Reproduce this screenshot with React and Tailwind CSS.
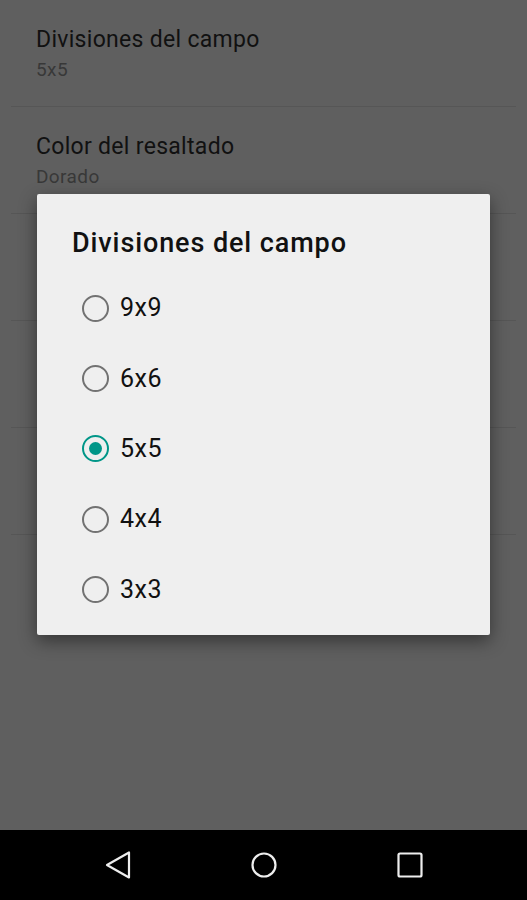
import React from "react";

const font = { fontFamily: "Roboto, 'Noto Sans', sans-serif" };

function BgItem({ title, subtitle }) {
  return (
    <div className="h-[107px] flex flex-col">
      <div className="flex-1 pl-[36px] pt-[27px]">
        {title && (
          <div className="text-[23px] leading-[26px] tracking-[0.3px] text-[#111111]">{title}</div>
        )}
        {subtitle && (
          <div className="mt-[5px] text-[19px] leading-[24px] tracking-[0.4px] text-[#383838]">{subtitle}</div>
        )}
      </div>
      <div className="mx-[11px] h-px bg-[#565656]" />
    </div>
  );
}

function Radio({ label, checked }) {
  return (
    <div className="h-[70.4px] flex items-center pl-[45px]">
      <div
        className={
          "w-[27px] h-[27px] rounded-full border-[2.5px] flex items-center justify-center " +
          (checked ? "border-[#009688]" : "border-[#727272]")
        }
      >
        {checked && <div className="w-[13px] h-[13px] rounded-full bg-[#009688]" />}
      </div>
      <span className="ml-[11px] text-[25px] leading-[28px] tracking-[0.5px] text-[#111111]">{label}</span>
    </div>
  );
}

export default function App() {
  return (
    <div className="relative w-[527px] h-[900px] bg-[#5f5f5f] flex flex-col overflow-hidden" style={font}>
      <div className="flex-1 flex flex-col">
        <BgItem title="Divisiones del campo" subtitle="5x5" />
        <BgItem title="Color del resaltado" subtitle="Dorado" />
        <BgItem />
        <BgItem />
        <BgItem />
      </div>

      <div className="h-[70px] bg-black flex items-center">
        <div className="w-[236px] flex justify-end pr-[0px]">
          <svg width="28" height="30" viewBox="0 0 28 30" className="mr-[104px]">
            <path d="M25 2.5 L25 27.5 L3 15 Z" fill="none" stroke="#eeeeee" strokeWidth="2.2" strokeLinejoin="round" />
          </svg>
        </div>
        <div className="absolute left-[251px] bottom-[22px]">
          <svg width="26" height="26" viewBox="0 0 26 26">
            <circle cx="13" cy="13" r="11.5" fill="none" stroke="#eeeeee" strokeWidth="2.2" />
          </svg>
        </div>
        <div className="absolute left-[397px] bottom-[22px]">
          <svg width="26" height="26" viewBox="0 0 26 26">
            <rect x="1.5" y="1.5" width="23" height="23" rx="1.5" fill="none" stroke="#eeeeee" strokeWidth="2.2" />
          </svg>
        </div>
      </div>

      <div className="absolute left-[37px] top-[194px] w-[453px] h-[441px] bg-[#efefef] rounded-[2px] shadow-[0_6px_18px_rgba(0,0,0,0.45)]">
        <div className="pl-[35px] pt-[33px] text-[27px] leading-[32px] tracking-[0.9px] font-medium text-[#111111]">
          Divisiones del campo
        </div>
        <div className="mt-[14px]">
          <Radio label="9x9" />
          <Radio label="6x6" />
          <Radio label="5x5" checked />
          <Radio label="4x4" />
          <Radio label="3x3" />
        </div>
      </div>
    </div>
  );
}
